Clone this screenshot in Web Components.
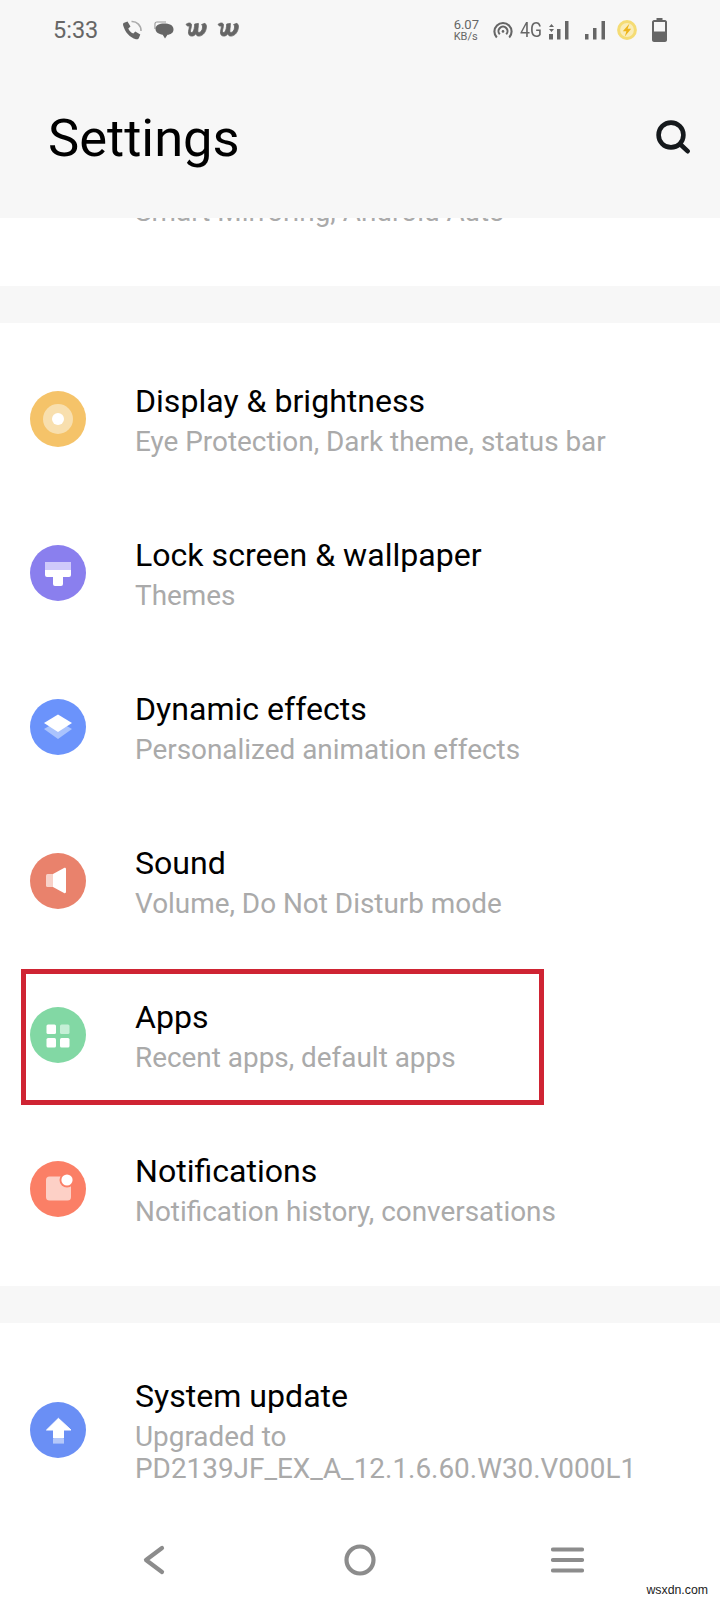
<!DOCTYPE html>
<html>
<head>
<meta charset="utf-8">
<title>Settings</title>
<style>
  html, body { margin: 0; padding: 0; background: #fff; }
  body { width: 720px; height: 1600px; overflow: hidden; font-family: Roboto, "Liberation Sans", sans-serif; }
</style>
</head>
<body>
<settings-screen>
  <app-header slot="header" title="Settings"></app-header>

  <clipped-line>Smart Mirroring, Android Auto</clipped-line>
  <section-gap></section-gap>

  <settings-group>
    <settings-row><settings-icon slot="icon" kind="display"></settings-icon>Display &amp; brightness<span slot="sub">Eye Protection, Dark theme, status bar</span></settings-row>
    <settings-row><settings-icon slot="icon" kind="lock"></settings-icon>Lock screen &amp; wallpaper<span slot="sub">Themes</span></settings-row>
    <settings-row><settings-icon slot="icon" kind="effects"></settings-icon>Dynamic effects<span slot="sub">Personalized animation effects</span></settings-row>
    <settings-row><settings-icon slot="icon" kind="sound"></settings-icon>Sound<span slot="sub">Volume, Do Not Disturb mode</span></settings-row>
    <settings-row highlight><settings-icon slot="icon" kind="apps"></settings-icon>Apps<span slot="sub">Recent apps, default apps</span></settings-row>
    <settings-row><settings-icon slot="icon" kind="notifications"></settings-icon>Notifications<span slot="sub">Notification history, conversations</span></settings-row>
  </settings-group>

  <section-gap></section-gap>

  <settings-group style="padding-top: 30px">
    <settings-row><settings-icon slot="icon" kind="update"></settings-icon>System update<span slot="sub">Upgraded to<br>PD2139JF_EX_A_12.1.6.60.W30.V000L1</span></settings-row>
  </settings-group>

  <nav-bar slot="nav"></nav-bar>
</settings-screen>

<script>
(function() {
  const screenTemplate = document.createElement('template');
  screenTemplate.innerHTML = `
    <style>
    :host {
        display: flex;
        flex-direction: column;
        position: relative;
        width: 720px;
        height: 1600px;
        overflow: hidden;
        background: #fff;
    }
    .body {
        flex: 1;
        min-height: 0;
        overflow: hidden;
    }
    </style>
    <slot name="header"></slot>
    <div class="body"><slot></slot></div>
    <slot name="nav"></slot>
  `;

  class SettingsScreen extends HTMLElement {
    constructor() {
      super();
      this.attachShadow({ mode: 'open' });
      this.shadowRoot.appendChild(screenTemplate.content.cloneNode(true));
    }
  }

  const headerTemplate = document.createElement('template');
  headerTemplate.innerHTML = `
    <style>
    :host {
        display: block;
        height: 218px;
        flex: none;
        background: #f7f7f7;
    }
    .title-row {
        display: flex;
        align-items: center;
        justify-content: space-between;
        padding: 43px 30px 0 48px;
    }
    h1 {
        margin: 0;
        font: 400 52.5px/70px Roboto, sans-serif;
        color: #000;
    }
    svg { display: block; margin-bottom: 3px; }
    </style>
    <status-bar></status-bar>
    <div class="title-row">
      <h1></h1>
      <svg width="34" height="34" viewBox="0 0 34 34" fill="none" stroke="#15191c" stroke-width="4.6" stroke-linecap="round">
        <circle cx="15" cy="15" r="12.4"/>
        <path d="M24 24l7.6 7.2"/>
      </svg>
    </div>
  `;

  class AppHeader extends HTMLElement {
    constructor() {
      super();
      this.attachShadow({ mode: 'open' });
      this.shadowRoot.appendChild(headerTemplate.content.cloneNode(true));
      this.shadowRoot.querySelector('h1').textContent = this.getAttribute('title');
    }
  }

  const WAVE = `<path d="M1 2.500c2-2 5-2 5.500 0 .2.800-.3 3-.8 5-.4 1.800-.2 3 .8 3 1.300 0 2.300-1.700 2.700-4 .3-1.500.4-3 .5-4.500l3.700-.6c0 2.500-.4 5-.5 6.600-.2 1.600.1 2.500 1 2.500 1.500 0 3.600-2 3.700-5.500 0-1.200-.5-1.800-1-2.500l3.300-1.200c1.200 1 1.600 2.300 1.500 3.800-.3 5-3.700 9-7.500 9-1.700 0-2.700-.8-3.100-2.300-1 1.400-2.300 2.300-4 2.300-2.500 0-3.700-1.800-3.300-4.500.3-1.800.9-3.700.8-5-.1-.7-.9-.6-1.600-.4z" fill="#666" stroke="#666" stroke-width=".8"/>`;

  const statusTemplate = document.createElement('template');
  statusTemplate.innerHTML = `
    <style>
    :host {
        display: flex;
        align-items: center;
        height: 60px;
        color: #666;
        font-family: Roboto, sans-serif;
    }
    svg { display: block; flex: none; }
    .time { font-size: 23.500px; margin-left: 53px; margin-right: 24px; }
    .left { display: flex; align-items: center; gap: 11px; }
    .right { display: flex; align-items: center; margin-left: auto; margin-right: 53px; }
    .speed { display: flex; flex-direction: column; font-size: 13px; line-height: 12px; margin-right: 14px; }
    .speed small { font-size: 11px; line-height: 11px; }
    .net { font-size: 20.500px; transform: scaleX(.86); margin: 0 4px 0 5px; width: 26px; text-align: center; }
    .charge { margin-left: 11px; filter: blur(.5px); }
    </style>
    <span class="time">5:33</span>
    <div class="left">
      <svg width="21" height="21" viewBox="0 0 20 21">
        <path d="M9 1.500a9 9 0 0 1 9.500 9.500" fill="none" stroke="#aaa" stroke-width="1.600"/>
        <path d="M1 3l4-1.600 3 5-2.200 2c1 2.400 2.600 4 5 5.200l2-2.200 5 3-1.400 3.600c-.4 1-1.600 1.600-3 1.200C7.400 17.400 2.600 12.500 .6 5.200 .4 4.300 .5 3.500 1 3z" fill="#666"/>
      </svg>
      <svg width="20" height="20" viewBox="0 0 20 20">
        <path d="M3 1.500h9v1h-9c-1 0-1.500.6-1.500 1.500v5H.4V4c0-1.500 1-2.500 2.600-2.500z" fill="#999"/>
        <path d="M10 3.500c5 0 9.500 1.500 9.500 6 0 3.500-3 5-6 5.300l-2.500 3.700-2.300-3.800C5 14.200 1.500 12.500 1.500 9c0-4 4-5.500 8.500-5.500z" fill="#666"/>
      </svg>
      <svg width="23" height="17" viewBox="0 0 23 17">${WAVE}</svg>
      <svg width="23" height="17" viewBox="0 0 23 17" style="margin-left:-2px">${WAVE}</svg>
    </div>
    <div class="right">
      <div class="speed"><span>6.07</span><small>KB/s</small></div>
      <svg width="20" height="18" viewBox="0 0 20 18" fill="none" stroke="#666" stroke-width="2.100">
        <path d="M3.800 16.500a8.600 8.600 0 1 1 12.400 0"/>
        <path d="M6.800 13.300a4.500 4.500 0 1 1 6.400 0"/>
        <circle cx="10" cy="10.400" r="1.300" fill="#666" stroke="none"/>
      </svg>
      <span class="net">4G</span>
      <svg width="22" height="20" viewBox="0 0 22 20" fill="#666">
        <path d="M3.500 4l-2.500 3h5zM1 9h5l-2.500 3z"/>
        <rect x="1" y="14" width="4" height="5.500"/>
        <rect x="9" y="9" width="3.500" height="10.500"/>
        <rect x="17" y="1" width="3.500" height="18.500"/>
      </svg>
      <svg width="22" height="20" viewBox="0 0 22 20" fill="#666" style="margin-left:14px">
        <rect x="1" y="14" width="3.500" height="5.500"/>
        <rect x="9" y="8" width="3.500" height="11.500"/>
        <rect x="17.500" y="1" width="3.500" height="18.500"/>
      </svg>
      <svg class="charge" width="20" height="20" viewBox="0 0 20 20">
        <circle cx="10" cy="10" r="8.400" fill="#faedb8" stroke="#f5dc74" stroke-width="3"/>
        <path d="M12.500 3.500L5.800 11.200h3.600L7.800 16.500l6.400-7.700h-3.600z" fill="#eeb51c"/>
      </svg>
      <svg width="15" height="24" viewBox="0 0 15 24" style="margin-left:15px">
        <path d="M4.500 0h6v2h2.500c1 0 2 1 2 2v18c0 1-1 2-2 2H2c-1 0-2-1-2-2V4c0-1 1-2 2-2h2.500z" fill="#666"/>
        <rect x="2" y="4" width="11" height="9.500" fill="#f7f7f7"/>
      </svg>
    </div>
  `;

  class StatusBar extends HTMLElement {
    constructor() {
      super();
      this.attachShadow({ mode: 'open' });
      this.shadowRoot.appendChild(statusTemplate.content.cloneNode(true));
    }
  }

  class ClippedLine extends HTMLElement {
    constructor() {
      super();
      this.attachShadow({ mode: 'open' });
      this.shadowRoot.innerHTML = `
        <style>
        :host {
            display: block;
            height: 68px;
            overflow: hidden;
            padding-left: 135px;
            color: #aaa;
            font: 400 27.900px/40px Roboto, sans-serif;
        }
        div { margin-top: -26px; }
        </style>
        <div><slot></slot></div>
      `;
    }
  }

  class SectionGap extends HTMLElement {
    constructor() {
      super();
      this.attachShadow({ mode: 'open' });
      this.shadowRoot.innerHTML = `
        <style>
        :host { display: block; height: 37px; background: #f7f7f7; }
        </style>
      `;
    }
  }

  class SettingsGroup extends HTMLElement {
    constructor() {
      super();
      this.attachShadow({ mode: 'open' });
      this.shadowRoot.innerHTML = `
        <style>
        :host { display: block; padding: 19px 0 20px; }
        </style>
        <slot></slot>
      `;
    }
  }

  const rowTemplate = document.createElement('template');
  rowTemplate.innerHTML = `
    <style>
    :host {
        display: flex;
        align-items: center;
        position: relative;
        min-height: 154px;
        padding-left: 30px;
        box-sizing: border-box;
    }
    .text {
        margin-left: 49px;
        padding-top: 1px;
        font-family: Roboto, sans-serif;
    }
    .title {
        font-size: 32.100px;
        line-height: 40px;
        color: #000;
    }
    .sub {
        font-size: 27.900px;
        line-height: 32px;
        margin-top: 5px;
        color: #aaa;
    }
    .mark {
        display: none;
        position: absolute;
        left: 21px;
        top: 11px;
        width: 523px;
        height: 136px;
        box-sizing: border-box;
        border: 5px solid #cf2433;
    }
    :host([highlight]) .mark { display: block; }
    </style>
    <slot name="icon"></slot>
    <div class="text">
      <div class="title"><slot></slot></div>
      <div class="sub"><slot name="sub"></slot></div>
    </div>
    <div class="mark"></div>
  `;

  class SettingsRow extends HTMLElement {
    constructor() {
      super();
      this.attachShadow({ mode: 'open' });
      this.shadowRoot.appendChild(rowTemplate.content.cloneNode(true));
    }
  }

  const ICONS = {
    display: `<circle cx="28" cy="28" r="28" fill="#f5c369"/>
      <circle cx="28" cy="28" r="15" fill="#f8dfae"/>
      <circle cx="28" cy="28" r="6" fill="#fff"/>`,
    lock: `<circle cx="28" cy="28" r="28" fill="#8a7fee"/>
      <rect x="15" y="17" width="26" height="8" fill="#cfc9fb"/>
      <path d="M15 25h26v5a2 2 0 0 1-2 2h-6v7a2 2 0 0 1-2 2h-6a2 2 0 0 1-2-2v-7h-6a2 2 0 0 1-2-2z" fill="#fff"/>`,
    effects: `<circle cx="28" cy="28" r="28" fill="#6b93fb"/>
      <path d="M14 30L28 22l14 8-14 10z" fill="#aac3fd"/>
      <path d="M28 15.500L42 24 28 33 14 24z" fill="#fff"/>`,
    sound: `<circle cx="28" cy="28" r="28" fill="#e9826c"/>
      <rect x="16" y="21" width="8" height="13" rx="1.500" fill="#f8d2c9"/>
      <path d="M23 21l11-6c1-.5 2 0 2 1v23c0 1-1 1.500-2 1l-11-6z" fill="#fff"/>`,
    apps: `<circle cx="28" cy="28" r="28" fill="#82d8a4"/>
      <rect x="16.500" y="17.500" width="9.500" height="9.500" rx="1.500" fill="#fff"/>
      <rect x="30" y="17.500" width="9.500" height="9.500" rx="1.500" fill="#c5efd6"/>
      <rect x="16.500" y="31" width="9.500" height="9.500" rx="1.500" fill="#fff"/>
      <rect x="30" y="31" width="9.500" height="9.500" rx="1.500" fill="#fff"/>`,
    notifications: `<circle cx="28" cy="28" r="28" fill="#fb7f66"/>
      <rect x="16" y="15.500" width="25" height="24" rx="3.500" fill="#fdd0c6"/>
      <circle cx="37" cy="19" r="7.500" fill="#fb7f66"/>
      <circle cx="37" cy="19" r="5.600" fill="#fff"/>`,
    update: `<circle cx="28" cy="28" r="28" fill="#6a8ff5"/>
      <path d="M28.400 16.300L41 28h-7.500v8h-10v-8h-7z" fill="#fff" stroke="#fff" stroke-linejoin="round"/>
      <path d="M23 36.500h11v5.100H23z" fill="#b5c8fa"/>`
  };

  class SettingsIcon extends HTMLElement {
    constructor() {
      super();
      this.attachShadow({ mode: 'open' });
      this.shadowRoot.innerHTML = `
        <style>
        :host { display: block; flex: none; width: 56px; height: 56px; }
        svg { display: block; }
        </style>
        <svg width="56" height="56" viewBox="0 0 56 56">${ICONS[this.getAttribute('kind')]}</svg>
      `;
    }
  }

  const navTemplate = document.createElement('template');
  navTemplate.innerHTML = `
    <style>
    :host {
        display: flex;
        flex: none;
        position: relative;
        align-items: center;
        justify-content: space-between;
        height: 80px;
        box-sizing: border-box;
        padding: 0 136px 0 143px;
        background: #fff;
    }
    svg { display: block; fill: none; stroke: #8c8c8c; stroke-width: 4.200; stroke-linecap: round; stroke-linejoin: round; }
    .mark {
        position: absolute;
        right: 12px;
        bottom: 1px;
        font: 400 12.300px/18px "Liberation Sans", sans-serif;
        color: #222;
    }
    </style>
    <svg width="22" height="30" viewBox="0 0 22 30"><path d="M19 3L3 15l16 12"/></svg>
    <svg width="32" height="32" viewBox="0 0 32 32" style="margin-left: 3px"><circle cx="16" cy="16" r="13.500"/></svg>
    <svg width="33" height="26" viewBox="0 0 33 26"><path d="M2 2.500h29M2 13h29M2 23.500h29"/></svg>
    <span class="mark">wsxdn.com</span>
  `;

  class NavBar extends HTMLElement {
    constructor() {
      super();
      this.attachShadow({ mode: 'open' });
      this.shadowRoot.appendChild(navTemplate.content.cloneNode(true));
    }
  }

  customElements.define('settings-screen', SettingsScreen);
  customElements.define('app-header', AppHeader);
  customElements.define('status-bar', StatusBar);
  customElements.define('clipped-line', ClippedLine);
  customElements.define('section-gap', SectionGap);
  customElements.define('settings-group', SettingsGroup);
  customElements.define('settings-row', SettingsRow);
  customElements.define('settings-icon', SettingsIcon);
  customElements.define('nav-bar', NavBar);
})();
</script>
</body>
</html>
